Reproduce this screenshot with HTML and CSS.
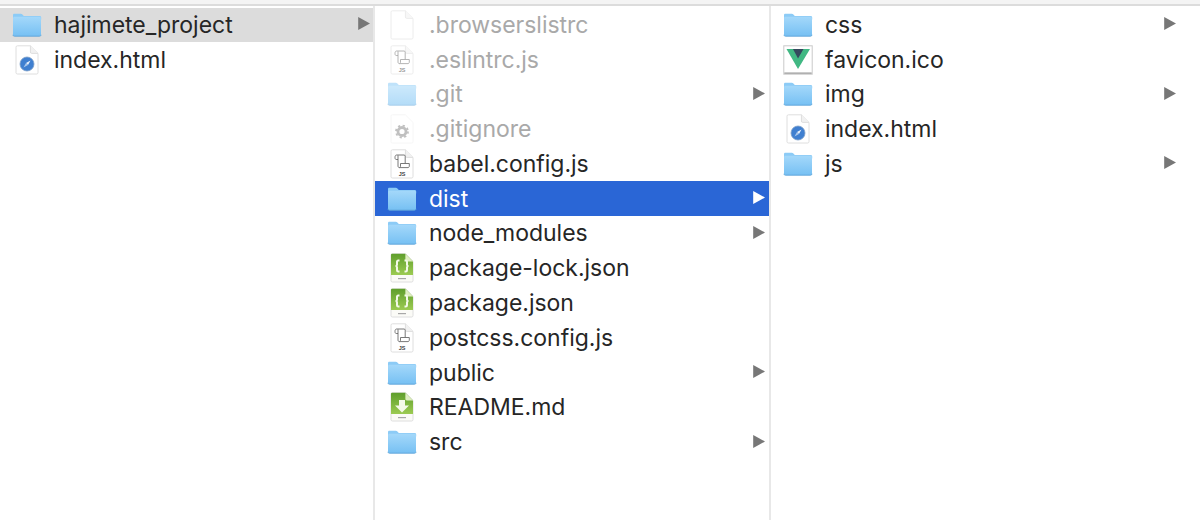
FILE: index.html
```html
<!DOCTYPE html>
<html lang="en">
<head>
<meta charset="utf-8">
<title>Finder columns</title>
<link rel="stylesheet" href="styles.css">
</head>
<body>
<svg class="defs" width="0" height="0" aria-hidden="true">
  <defs>
    <linearGradient id="fg" x1="0" y1="0" x2="0" y2="1"><stop offset="0" stop-color="#a4d8fa"/><stop offset="1" stop-color="#76c0f3"/></linearGradient>
    <linearGradient id="gg" x1="0" y1="0" x2="0" y2="1"><stop offset="0" stop-color="#5f9e2c"/><stop offset="1" stop-color="#9ccb52"/></linearGradient>
    <symbol id="folder" viewBox="0 0 30 24">
      <path d="M1 4.5V2.2C1 1.3 1.6.8 2.4.8h6.4c.7 0 1.1.3 1.6.8l1.4 1.3h15.8c1 0 1.6.6 1.6 1.6v2H1z" fill="#8ccbf6"/>
      <path d="M1 5.2c0-.9.6-1.5 1.5-1.5h25c.9 0 1.5.6 1.5 1.5v16.6c0 .9-.6 1.4-1.5 1.4h-25c-.9 0-1.500-.5-1.500-1.400z" fill="url(#fg)"/>
      <path d="M1 21.8c0 .9.6 1.4 1.500 1.400h25c.9 0 1.500-.5 1.500-1.400" fill="none" stroke="#5ea4d8" stroke-width=".9"/>
    </symbol>
    <symbol id="sheet" viewBox="0 0 24 30">
      <path d="M1 2.2C1 1.3 1.5.8 2.4.8h13L23 8.400v19.200c0 .9-.5 1.400-1.400 1.400H2.400c-.9 0-1.400-.5-1.400-1.400z" fill="#fff" stroke="#dedede"/>
      <path d="M15.400.8v6.200c0 .9.5 1.400 1.400 1.400H23" fill="#f1f1f1" stroke="#dedede"/>
    </symbol>
    <symbol id="safari" viewBox="0 0 24 30">
      <use href="#sheet" width="24" height="30"/>
      <circle cx="12" cy="19" r="7" fill="#3f7fd0"/>
      <circle cx="12" cy="19" r="7" fill="none" stroke="#7d9fc8" stroke-width=".8"/>
      <path d="M15.500 15.500 13 20l-2 -2z" fill="#e8f0fa"/>
      <path d="M8.500 22.500 11 18l2 2z" fill="#a9c6ea"/>
    </symbol>
    <symbol id="script" viewBox="0 0 24 30">
      <use href="#sheet" width="24" height="30"/>
      <path d="M8 10.500H6.200C5.400 10.500 5 9.800 5 8.500 5 7 5.600 6 6.500 6H14c.8 0 1.200.5 1.200 1.200v7.300M8 6.300V17c0 .9.500 1.600 1.300 1.600H18c.8 0 1.300-.7 1.300-1.600v-2.500H10.500V17c0 .9-.5 1.600-1.200 1.600" fill="none" stroke="#6a6a6a" stroke-width=".9"/>
      <text class="js-tag" x="12" y="26.500">JS</text>
    </symbol>
    <symbol id="gear" viewBox="0 0 24 30">
      <path d="M1 2.200C1 1.300 1.500.8 2.400.8h13L23 8.400v19.200c0 .9-.5 1.400-1.400 1.400H2.400c-.9 0-1.400-.5-1.400-1.400z" fill="#fff" stroke="#f0f0f0"/>
      <circle cx="12" cy="17.500" r="4" fill="none" stroke="#8e8e8e" stroke-width="2.800"/>
      <circle cx="12" cy="17.500" r="6" fill="none" stroke="#8e8e8e" stroke-width="1.800" stroke-dasharray="2.200 2.500"/>
    </symbol>
    <symbol id="green" viewBox="0 0 24 30">
      <path d="M1 2.200C1 1.300 1.500.8 2.400.8h13L23 8.400v19.200c0 .9-.5 1.400-1.400 1.400H2.400c-.9 0-1.400-.5-1.400-1.400z" fill="#fbfbf7" stroke="#dedede"/>
      <path d="M1 2.200C1 1.300 1.500.8 2.400.8h13L23 8.400V22H1z" fill="url(#gg)"/>
      <path d="M15.400.8v6.200c0 .9.5 1.400 1.400 1.400H23z" fill="#dfeec2"/>
      <rect x="8" y="25" width="8" height="1.200" fill="#a8a8a8"/>
    </symbol>
    <symbol id="json" viewBox="0 0 24 30">
      <use href="#green" width="24" height="30"/>
      <path d="M9.500 7.500H8.300c-.9 0-1.300.5-1.300 1.300v2.900c0 .7-.4 1.100-1.300 1.300.9.2 1.300.6 1.300 1.300v2.900c0 .8.4 1.300 1.300 1.300h1.200M14.500 7.500h1.200c.9 0 1.300.5 1.300 1.300v2.900c0 .7.4 1.100 1.300 1.300-.9.2-1.300.6-1.300 1.300v2.900c0 .8-.4 1.300-1.300 1.300h-1.200" fill="none" stroke="#f4f9e8" stroke-width="2"/>
    </symbol>
    <symbol id="md" viewBox="0 0 24 30">
      <use href="#green" width="24" height="30"/>
      <path d="M9 8h6v5.500h4L12 20.500 5 13.500h4z" fill="#f4f9e8"/>
    </symbol>
    <symbol id="vue" viewBox="0 0 30 30">
      <rect x=".8" y=".8" width="28.400" height="28.400" fill="#fff" stroke="#c9c9c9"/>
      <rect x="1.300" y="27.400" width="27.400" height="1.500" fill="#a9a9a9"/>
      <path d="M3.500 4h23.500L15 24z" fill="#41b883"/>
      <path d="M10 4h10.500L15 13.500z" fill="#35495e"/>
    </symbol>
    <symbol id="arrow" viewBox="0 0 12 13">
      <path d="M.2 0 12 6.500.2 13z"/>
    </symbol>
  </defs>
</svg>
<div class="toolbar"></div>
<main class="browser">
  <section class="col col-a">
    <div class="row row-inactive"><svg class="ico fold"><use href="#folder"/></svg><span class="name">hajimete_project</span><svg class="arr"><use href="#arrow"/></svg></div>
    <div class="row"><svg class="ico doc"><use href="#safari"/></svg><span class="name">index.html</span></div>
  </section>
  <section class="col col-b">
    <div class="row dim"><svg class="ico doc"><use href="#sheet"/></svg><span class="name">.browserslistrc</span></div>
    <div class="row dim"><svg class="ico doc"><use href="#script"/></svg><span class="name">.eslintrc.js</span></div>
    <div class="row dim"><svg class="ico fold"><use href="#folder"/></svg><span class="name">.git</span><svg class="arr"><use href="#arrow"/></svg></div>
    <div class="row dim"><svg class="ico doc"><use href="#gear"/></svg><span class="name">.gitignore</span></div>
    <div class="row"><svg class="ico doc"><use href="#script"/></svg><span class="name">babel.config.js</span></div>
    <div class="row row-active"><svg class="ico fold"><use href="#folder"/></svg><span class="name">dist</span><svg class="arr"><use href="#arrow"/></svg></div>
    <div class="row"><svg class="ico fold"><use href="#folder"/></svg><span class="name">node_modules</span><svg class="arr"><use href="#arrow"/></svg></div>
    <div class="row"><svg class="ico doc"><use href="#json"/></svg><span class="name">package-lock.json</span></div>
    <div class="row"><svg class="ico doc"><use href="#json"/></svg><span class="name">package.json</span></div>
    <div class="row"><svg class="ico doc"><use href="#script"/></svg><span class="name">postcss.config.js</span></div>
    <div class="row"><svg class="ico fold"><use href="#folder"/></svg><span class="name">public</span><svg class="arr"><use href="#arrow"/></svg></div>
    <div class="row"><svg class="ico doc"><use href="#md"/></svg><span class="name">README.md</span></div>
    <div class="row"><svg class="ico fold"><use href="#folder"/></svg><span class="name">src</span><svg class="arr"><use href="#arrow"/></svg></div>
  </section>
  <section class="col col-c">
    <div class="row"><svg class="ico fold"><use href="#folder"/></svg><span class="name">css</span><svg class="arr"><use href="#arrow"/></svg></div>
    <div class="row"><svg class="ico vue"><use href="#vue"/></svg><span class="name">favicon.ico</span></div>
    <div class="row"><svg class="ico fold"><use href="#folder"/></svg><span class="name">img</span><svg class="arr"><use href="#arrow"/></svg></div>
    <div class="row"><svg class="ico doc"><use href="#safari"/></svg><span class="name">index.html</span></div>
    <div class="row"><svg class="ico fold"><use href="#folder"/></svg><span class="name">js</span><svg class="arr"><use href="#arrow"/></svg></div>
  </section>
</main>
</body>
</html>
```

FILE: styles.css
```css
* { box-sizing: border-box; }
html, body { margin: 0; height: 100%; overflow: hidden; background: #fff; }
body {
  display: flex;
  flex-direction: column;
  font-family: "Inter", "Liberation Sans", sans-serif;
  color: #262626;
}
.defs { position: absolute; }
.js-tag { font: 700 5.5px "Liberation Sans", sans-serif; fill: #444; text-anchor: middle; }
.toolbar { height: 6px; flex: none; background: #f4f4f4; border-bottom: 2px solid #dcdcdc; }
.browser { flex: 1; display: flex; min-height: 0; }
.col { display: flex; flex-direction: column; flex: none; padding-top: 1.5px; }
.col-a { width: 375px; border-right: 2px solid #e8e8e8; }
.col-b { width: 396px; border-right: 2px solid #e8e8e8; }
.col-c { flex: 1; }
.row {
  flex: none;
  height: 34.77px;
  display: flex;
  align-items: center;
  padding-left: 12px;
}
.col-a .row { padding-right: 3px; }
.col-b .row { padding-right: 4px; }
.col-c .row { padding-right: 24px; }
.name { font-size: 23px; letter-spacing: -.02px; white-space: nowrap; margin-left: 12px; flex: 1; }
.ico { flex: none; }
.fold { width: 30px; height: 24px; }
.doc { width: 24px; height: 30px; margin-left: 3px; margin-right: 3px; }
.vue { width: 30px; height: 30px; }
.arr { width: 12px; height: 13px; margin-bottom: 2px; fill: #777; flex: none; }
.row-inactive { background: #dcdcdc; }
.row-active { background: #2a66d6; color: #fff; }
.row-active .arr { fill: #fff; }
.dim .name { color: #a9a9a9; }
.dim .ico { opacity: .55; }
```
